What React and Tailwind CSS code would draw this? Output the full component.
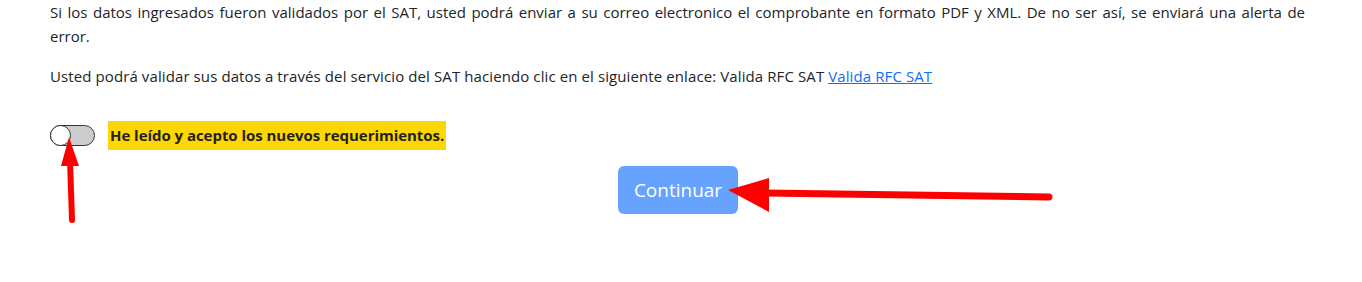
import React from "react";

export default function App() {
  const font = { fontFamily: '"Open Sans", "Noto Sans", sans-serif' };
  return (
    <div className="relative w-[1362px] h-[282px] bg-white text-[#212529] overflow-hidden" style={font}>
      <div className="pl-[50px] pr-[57px]">
        <div className="text-[15px] leading-[24px]">
          <p className="text-justify [text-align-last:justify]">
            Si los datos ingresados fueron validados por el SAT, usted podrá enviar a su correo electronico el comprobante en formato PDF y XML. De no ser así, se enviará una alerta de
          </p>
          <p>error.</p>
        </div>
        <p className="mt-[16px] text-[15px] leading-[24px] tracking-[0.1px]">
          Usted podrá validar sus datos a través del servicio del SAT haciendo clic en el siguiente enlace: Valida RFC SAT{" "}
          <a href="#" className="text-[#0d6efd] underline">Valida RFC SAT</a>
        </p>
        <div className="mt-[33px] flex items-center">
          <div className="relative w-[45px] h-[21px] rounded-full bg-[#cccccc] border border-[#333]">
            <div className="absolute left-[-1px] top-[-1px] w-[21px] h-[21px] rounded-full bg-white border border-[#333]" />
          </div>
          <span className="ml-[13px] bg-[#ffd700] px-[2px] h-[29px] flex items-center font-bold text-[15px] text-[#222] tracking-[-0.04px]">
            He leído y acepto los nuevos requerimientos.
          </span>
        </div>
      </div>
      <div className="mt-[16px] flex justify-center pr-[6px]">
        <button className="w-[120px] h-[48px] rounded-[6px] bg-[#66a3ff] text-white text-[19px]">
          Continuar
        </button>
      </div>

      <svg className="absolute left-0 top-0 pointer-events-none" width="1362" height="282">
        <line x1="72" y1="220" x2="70" y2="160" stroke="#ff0000" strokeWidth="6" strokeLinecap="round" />
        <polygon points="69,137 61,166 79,166" fill="#ff0000" />
        <line x1="1049" y1="197" x2="765" y2="193" stroke="#ff0000" strokeWidth="7" strokeLinecap="round" />
        <polygon points="728,190 769,178 769,212" fill="#ff0000" />
      </svg>
    </div>
  );
}
